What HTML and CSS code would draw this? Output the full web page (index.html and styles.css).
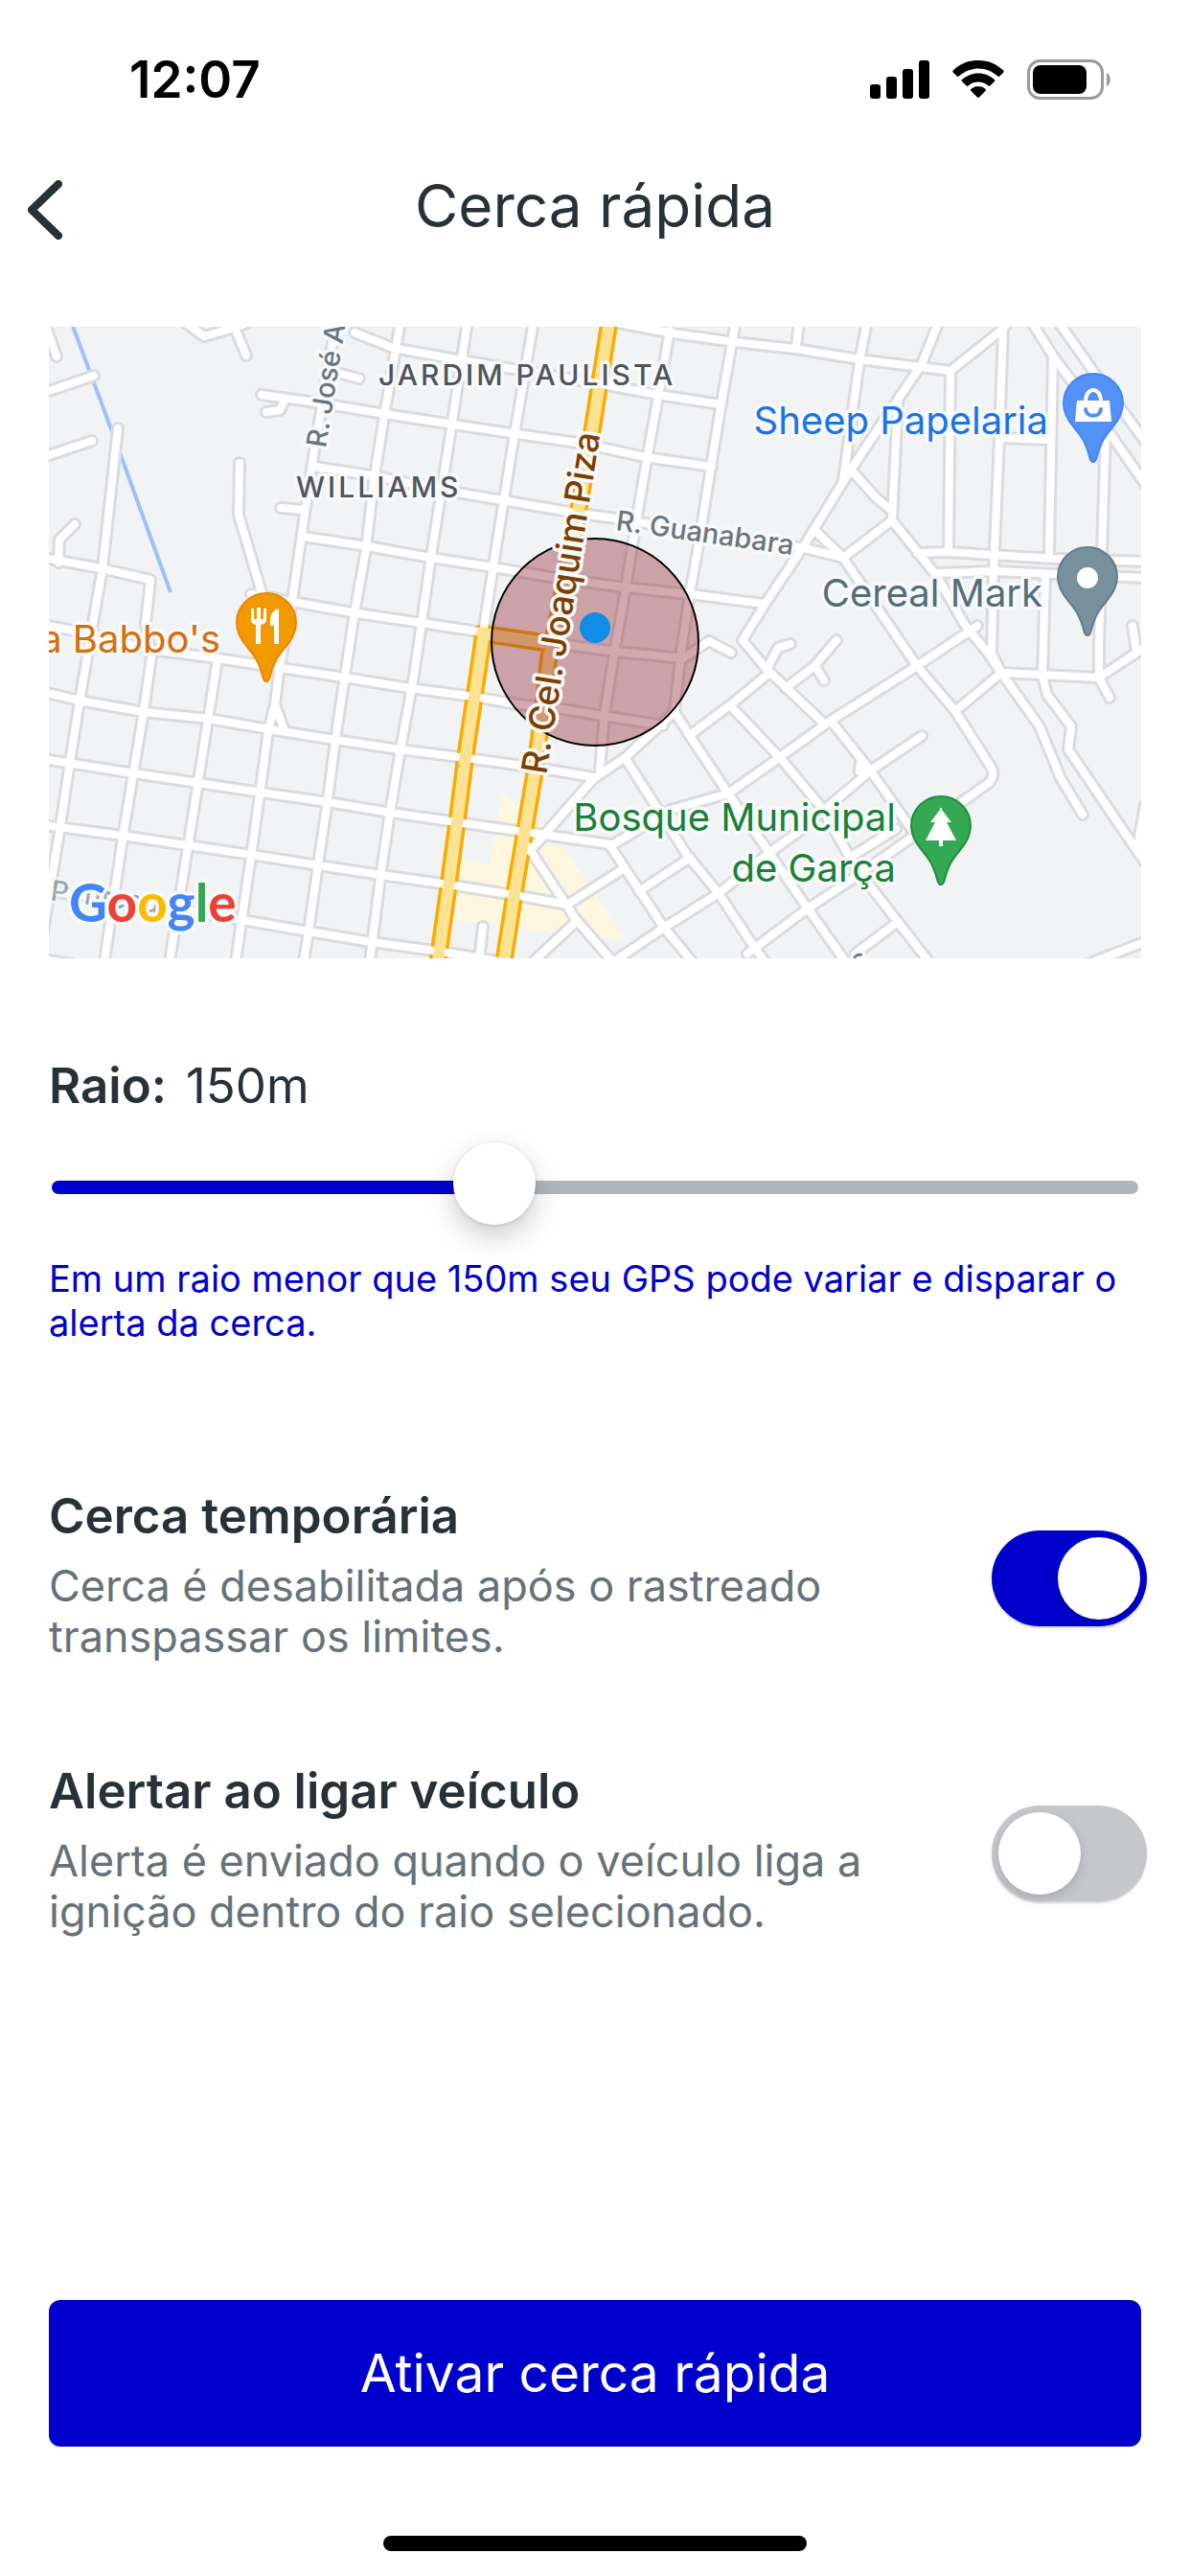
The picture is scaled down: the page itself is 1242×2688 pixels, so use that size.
FILE: index.html
```
<!DOCTYPE html>
<html lang="pt-BR">
<head>
    <meta charset="UTF-8">
    <meta name="viewport" content="width=device-width, initial-scale=1.0">
    <title>Cerca rápida</title>
    <link rel="stylesheet" href="styles.css">
</head>
<body>
    <div class="screen">
        <div class="status-bar">
            <span class="time">12:07</span>
            <div class="status-icons">
                <svg width="62" height="40" viewBox="0 0 62 40">
                    <rect x="0" y="25" width="11" height="15" rx="3"/>
                    <rect x="17" y="17" width="11" height="23" rx="3"/>
                    <rect x="34" y="9" width="11" height="31" rx="3"/>
                    <rect x="51" y="0" width="11" height="40" rx="3"/>
                </svg>
                <svg width="54" height="40" viewBox="0 0 54 40">
                    <path d="M27 0C16.500 0 7.500 4 .8 10.600c-.6.6-.6 1.300-.1 1.900l4 4.100c.6.6 1.400.6 2 0C12.200 11.400 19.200 8.500 27 8.500s14.800 2.900 20.300 8.100c.6.6 1.400.6 2 0l4-4.100c.5-.6.5-1.300-.1-1.900C46.500 4 37.500 0 27 0z"/>
                    <path d="M27 13.500c-6.600 0-12.500 2.500-16.900 6.600-.6.6-.6 1.300 0 1.900l4.500 4.500c.6.6 1.300.6 1.900 0 2.800-2.500 6.500-4 10.500-4s7.700 1.500 10.500 4c.6.6 1.300.6 1.900 0l4.500-4.500c.6-.6.6-1.300 0-1.900-4.400-4.100-10.300-6.600-16.900-6.600z"/>
                    <path d="M27 27c-3 0-5.600 1.100-7.600 2.900-.6.6-.6 1.300 0 1.900l6.600 6.600c.6.600 1.400.6 2 0l6.600-6.600c.6-.6.6-1.300 0-1.900-2-1.800-4.600-2.900-7.600-2.900z"/>
                </svg>
                <svg width="88" height="42" viewBox="0 0 88 42">
                    <rect x="1.500" y="1.500" width="77" height="39" rx="12" fill="none" stroke="#9a9a9a" stroke-width="3"/>
                    <rect x="6" y="6" width="56" height="30" rx="8"/>
                    <path d="M83 14c5 2 5 12 0 14z" fill="#9a9a9a"/>
                </svg>
            </div>
        </div>

        <header class="header">
            <button class="back" type="button" aria-label="Voltar">
                <svg width="36" height="62" viewBox="0 0 36 62">
                    <path d="M32 4L4 31l28 27" fill="none" stroke="#263238" stroke-width="8" stroke-linecap="round" stroke-linejoin="round"/>
                </svg>
            </button>
            <h1>Cerca rápida</h1>
        </header>

        <main class="content">
            <svg class="map" viewBox="51 341 1140 659" role="img" aria-label="Mapa">
                <defs>
                    <path id="pin" d="M-31 0a31 31 0 0 1 62 0C31 10 26 18 20 25 12 34 8 41 4 55 3 60 1 61 0 61s-3-1-4-6C-8 41-12 34-20 25-26 18-31 10-31 0z"/>
                    <g id="streets">
                        <!-- cross streets, west to east -->
                        <path d="M123 447L107 593 97 650 83 732 73 795 63 862 40 1003"/>
                        <path d="M51 583L105 593 157 605 152 650 158 685 150 742 140 802 129 868 109 1003"/>
                        <path d="M227 688L218 745 207 815 197 878 177 1003"/>
                        <path d="M351 335L345 370 328 470 317 543 305 627 292 695 287 735 280 762 272 822 263 887 246 1003M287 735L297 763"/>
                        <path d="M418 335L400 440 390 503 382 573 370 640 360 705 350 772 342 835 332 902 322 972 317 1003"/>
                        <path d="M488 335L472 440 460 517 450 580 440 650 432 705 418 782 407 848 398 908 386 1003"/>
                        <path d="M557 335L537 453 525 527 515 590 505 655"/>
                        <path d="M699 345L687 413 675 480 663 550 652 620 641 682 631 745 626 803"/>
                        <path d="M768 335L753 420 742 487 730 563 720 620 712 672 704 740"/>
                        <path d="M834 335L831 362M905 335L897 377 887 450 880 502"/>
                        <!-- long streets, north to south -->
                        <path d="M640 336L703 348 767 357 830 364 897 375 992 387 1047 343 1053 335"/>
                        <path d="M370 347L410 363 477 375 547 387 623 400 687 412 752 422"/>
                        <path d="M273 412L330 420 402 432 473 443 540 453 610 463 673 477 743 487"/>
                        <path d="M328 487L393 497 460 511 530 523 600 535 643 541 730 555 840 572 880 582"/>
                        <path d="M293 530L317 532M317 560L383 570 450 582 515 592 580 603 652 613 720 620 797 630"/>
                        <path d="M262 620L305 628 373 640 440 650 505 660 577 671 643 680 713 687 740 669 763 681"/>
                        <path d="M45 652L97 662 158 678 227 687 293 697 360 707 427 718 495 727 540 735 587 740 630 747 692 757"/>
                        <path d="M45 722L83 731 150 743 218 750 287 762 350 772 417 782 487 791 560 801 619 811"/>
                        <path d="M45 792L140 807 207 817 273 827 342 837 408 848 477 858 547 868 637 881"/>
                        <path d="M45 861L128 872 195 882 263 892 332 903 398 913 468 923 537 934 592 944"/>
                        <path d="M45 929L183 948 253 960 322 972 388 983 460 993 520 1003M45 1001L75 1006M504 967L500 1003"/>
                        <!-- west outskirts -->
                        <path d="M46 335L59 372M45 410L98 392M45 477L96 460M78 547L62 563 61 587"/>
                        <path d="M191 335L213 351 245 342 262 335M245 342L257 371M297 418L292 428 278 430M348 388L375 395"/>
                        <path d="M250 483L249 537 275 625"/>
                        <!-- south-east quarter -->
                        <path d="M553 888L619 813 653 790 704 743M592 944L650 907M557 1003L600 963"/>
                        <path d="M550 882L600 958 639 1003M637 883L693 968 722 1003M653 792L717 892 750 932 787 988 798 1003"/>
                        <path d="M704 743L720 768 760 828 803 890 843 948 882 1003M763 737L817 794 857 842 893 905 969 1003"/>
                        <path d="M637 883L700 845 760 828 800 800 867 752 957 695 1020 653"/>
                        <path d="M720 767L763 735 803 702M667 930L720 895M638 1005L693 968 750 932 803 890 833 868 910 803 962 768"/>
                        <path d="M910 803L897 805 898 795M780 995L843 948 893 915 950 875M893 995L937 962"/>
                        <path d="M867 752L907 802 952 866M890 893L935 865"/>
                        <path d="M820 718L850 695 873 668M852 697L860 710M801 697L812 676 825 672"/>
                        <!-- north-east quarter -->
                        <path d="M980 335L962 380 935 420 888 490 840 568 800 628 775 668 800 698 860 755"/>
                        <path d="M992 387L990 575M1047 343L1043 457 1037 597 1035 682 1045 702"/>
                        <path d="M1076 335L1100 373 1150 440 1197 508M1099 373L1095 577M1091 600L1088 705"/>
                        <path d="M1104 335L1143 390 1197 463M1045 457L1095 459M1154 450L1150 577 1147 670 1147 707"/>
                        <path d="M937 420L931 543 880 582M888 490L915 520 931 533M850 553L880 582 940 670 957 695 997 742 1034 800C1038 806 1037 811 1032 817L985 850"/>
                        <path d="M931 543L977 600 1007 652 1030 680 1045 702 1085 758 1107 812 1130 850"/>
                        <path d="M957 577L990 576 1100 583 1197 586M977 598L1040 596 1100 599 1197 603"/>
                        <path d="M997 742L1045 702 1147 707 1197 674M1147 707L1158 728"/>
                        <path d="M1088 705L1093 725 1118 758 1115 782 1197 903M1182 653L1186 680M1195 840L1187 885M1135 1006L1197 982"/>
                    </g>
                    <g id="avenues">
                        <path d="M636 335L618 450 602 543 583 640 573 685 563 768 557 812 547 872 537 932 526 1003"/>
                        <path d="M505 660L495 728 485 795 477 858 468 925 457 1003"/>
                        <path d="M503 661L577 672"/>
                    </g>
                </defs>
                <rect x="51" y="341" width="1140" height="659" fill="#f1f3f4"/>
                <path class="district" d="M523 828l44 32-14 35 24 38 20 25-20 15-102-13 8-63 28 5zM562 887l5-7 21 3 65 98-33-3-23-40z"/>
                <path class="river" d="M74 335L118 453 178 618"/>
                <use href="#streets" class="street-edge"/>
                <use href="#avenues" class="avenue-edge"/>
                <use href="#streets" class="street"/>
                <use href="#avenues" class="avenue"/>

                <circle cx="621" cy="670" r="108" fill="#912834" fill-opacity=".4" stroke="#000" stroke-width="2"/>

                <g class="label district-name">
                    <text x="395" y="402">JARDIM PAULISTA</text>
                    <text x="309" y="519">WILLIAMS</text>
                </g>
                <g class="label street-name">
                    <text transform="translate(340 468) rotate(-81)">R. José Au</text>
                    <text transform="translate(642 553) rotate(8)">R. Guanabara</text>
                    <text transform="translate(52 939) rotate(7)" opacity=".6">Penteado</text>
                    <text transform="translate(896 1014) rotate(-36)">s</text>
                </g>
                <text class="label avenue-name" transform="translate(570 809) rotate(-81)">R. Cel. Joaquim Piza</text>
                <circle cx="621" cy="655" r="16" fill="#118de8"/>

                <g class="label place">
                    <text x="1094" y="453" fill="#1a73e8">Sheep Papelaria</text>
                    <text x="1088" y="633" fill="#546e7a">Cereal Mark</text>
                    <text x="230" y="681" fill="#d56e0c">a Babbo's</text>
                    <text x="935" y="867" fill="#188038">Bosque Municipal</text>
                    <text x="935" y="920" fill="#188038">de Garça</text>
                </g>

                <g transform="translate(1141 421)">
                    <use href="#pin" fill="#5491f5" stroke="#4285f4" stroke-width="2"/>
                    <path d="M-17-3h34l2 22h-38z" fill="#fff"/>
                    <path d="M-8-2c0-16 16-16 16 0" fill="none" stroke="#fff" stroke-width="4"/>
                    <path d="M-8 6c1 9 15 9 16 0" fill="none" stroke="#5491f5" stroke-width="4" stroke-linecap="round"/>
                </g>
                <g transform="translate(1135 602)">
                    <use href="#pin" fill="#78909c" stroke="#607d8b" stroke-width="2"/>
                    <circle cy="1" r="11" fill="#fff"/>
                </g>
                <g transform="translate(278 650)">
                    <use href="#pin" fill="#f29900" stroke="#ea8600" stroke-width="2"/>
                    <path d="M-16-15v12q0 4 5 5v20h5V2q6-1 6-5v-12h-3v11h-3v-12h-4v12h-3v-11zM13-15Q4-13 4-2v5h4v19h5z" fill="#fff"/>
                </g>
                <g transform="translate(982 862)">
                    <use href="#pin" fill="#34a853" stroke="#1e8e3e" stroke-width="2"/>
                    <path d="M-1-19h2v2L11-4H6l10 19H2v6h-4v-6h-14L-6-4h-5l10-13z" fill="#fff"/>
                </g>

                <text class="label google" x="72" y="962"><tspan fill="#4285f4">G</tspan><tspan fill="#ea4335">o</tspan><tspan fill="#fbbc04">o</tspan><tspan fill="#4285f4">g</tspan><tspan fill="#34a853">l</tspan><tspan fill="#ea4335">e</tspan></text>
            </svg>

            <section class="radius">
                <label class="radius-label" for="radius"><strong>Raio:</strong> <span>150m</span></label>
                <input class="slider" id="radius" type="range" min="50" max="300" value="150">
                <p class="hint">Em um raio menor que 150m seu GPS pode variar e disparar o alerta da cerca.</p>
            </section>

            <section class="options">
                <div class="option">
                    <div class="option-text">
                        <label for="temporary">Cerca temporária</label>
                        <p>Cerca é desabilitada após o rastreado transpassar os limites.</p>
                    </div>
                    <input class="switch" id="temporary" type="checkbox" role="switch" checked>
                </div>
                <div class="option">
                    <div class="option-text">
                        <label for="ignition">Alertar ao ligar veículo</label>
                        <p>Alerta é enviado quando o veículo liga a ignição dentro do raio selecionado.</p>
                    </div>
                    <input class="switch" id="ignition" type="checkbox" role="switch">
                </div>
            </section>

            <button class="activate" type="button">Ativar cerca rápida</button>
        </main>
        <div class="home-bar"></div>
    </div>
</body>
</html>
```
FILE: styles.css
```
* {
    box-sizing: border-box;
}
body {
    margin: 0;
    background: #fff;
    color: #263238;
    font-family: Inter, 'Liberation Sans', sans-serif;
}
h1, p {
    margin: 0;
}
.screen {
    display: flex;
    flex-direction: column;
    min-height: 100vh;
}
.status-bar {
    display: flex;
    justify-content: space-between;
    align-items: center;
    padding: 51px 82px 0 135px;
    color: #000;
}
.time {
    font-size: 53px;
    line-height: 64px;
    font-weight: 600;
}
.status-icons {
    display: flex;
    align-items: center;
    gap: 24px;
}
.header {
    display: grid;
    grid-template-columns: 96px 1fr 96px;
    align-items: center;
    height: 120px;
    margin-top: 42px;
}
.back {
    justify-self: start;
    display: flex;
    margin-top: 4px;
    padding: 0 0 0 29px;
    border: none;
    background: none;
    cursor: pointer;
}
.header h1 {
    padding-bottom: 4px;
    font-size: 62px;
    line-height: 78px;
    font-weight: 400;
    text-align: center;
}
.content {
    flex: 1;
    display: flex;
    flex-direction: column;
    padding: 64px 51px 0;
}

/* map */
.map {
    display: block;
    width: 100%;
    height: auto;
    overflow: hidden;
}
.district {
    fill: #fef7e0;
}
.river {
    fill: none;
    stroke: #9dc1fb;
    stroke-width: 4;
}
.street-edge, .street, .avenue-edge, .avenue {
    fill: none;
    stroke-linecap: round;
    stroke-linejoin: round;
}
.street-edge {
    stroke: #dadce0;
    stroke-width: 14;
}
.street {
    stroke: #fff;
    stroke-width: 8;
}
.avenue-edge {
    stroke: #f9ab00;
    stroke-width: 19;
}
.avenue {
    stroke: #fde293;
    stroke-width: 12;
}
.label {
    paint-order: stroke;
    stroke: #f8f9fa;
    stroke-width: 7px;
    stroke-linejoin: round;
}
.district-name {
    fill: #50555c;
    font-size: 30px;
    font-weight: 500;
    letter-spacing: 3px;
}
.street-name {
    fill: #6b757b;
    font-size: 29px;
    font-weight: 500;
}
.avenue-name {
    fill: #7c3f00;
    font-size: 37px;
    font-weight: 500;
}
.place {
    font-size: 40px;
    text-anchor: end;
}
.google {
    font-family: Lato, sans-serif;
    font-size: 55px;
    font-weight: 700;
}

/* radius */
.radius {
    margin-top: 101px;
}
.radius-label {
    display: flex;
    gap: 20px;
    font-size: 51px;
    line-height: 64px;
}
.radius-label strong, .option-text label {
    font-weight: 600;
}
.slider {
    appearance: none;
    display: block;
    width: calc(100% - 6px);
    height: 86px;
    margin: 31px 3px 0;
    background: none;
    cursor: pointer;
}
.slider::-webkit-slider-runnable-track {
    height: 14px;
    border-radius: 7px;
    background: linear-gradient(to right, #0000cd 40%, #b0b6ba 40%);
}
.slider::-webkit-slider-thumb {
    appearance: none;
    width: 86px;
    height: 86px;
    margin-top: -40px;
    border-radius: 50%;
    background: #fff;
    box-shadow: 0 12px 30px rgba(0, 0, 0, 0.2), 0 1px 4px rgba(0, 0, 0, 0.12);
}
.hint {
    margin-top: 29px;
    color: #0000cd;
    font-size: 38px;
    line-height: 46px;
}

/* options */
.options {
    display: flex;
    flex-direction: column;
    gap: 93px;
    margin-top: 147px;
}
.option {
    display: flex;
    justify-content: space-between;
    align-items: center;
    margin-right: -6px;
}
.option-text {
    flex: 1;
    max-width: 880px;
    padding-bottom: 10px;
}
.option-text label {
    display: block;
    font-size: 51px;
    line-height: 64px;
}
.option-text p {
    margin-top: 14px;
    color: #66727a;
    font-size: 45px;
    line-height: 53px;
}
.switch {
    appearance: none;
    flex: none;
    width: 162px;
    height: 100px;
    margin: 0;
    padding: 7px;
    border-radius: 50px;
    background: #c5c7cb;
    box-shadow: 0 2px 2px rgba(0, 0, 0, 0.15);
    cursor: pointer;
}
.switch::before {
    content: "";
    display: block;
    width: 86px;
    height: 86px;
    border-radius: 50%;
    background: #fff;
    box-shadow: 0 4px 12px rgba(0, 0, 0, 0.15);
}
.switch:checked {
    background: #0000cd;
}
.switch:checked::before {
    margin-left: auto;
}

.activate {
    margin-top: auto;
    padding: 42px;
    border: none;
    border-radius: 12px;
    background: #0000cd;
    color: #fff;
    font-family: inherit;
    font-size: 55px;
    line-height: 69px;
    cursor: pointer;
}
.home-bar {
    align-self: center;
    width: 442px;
    height: 16px;
    margin: 93px 0 26px;
    border-radius: 8px;
    background: #000;
}
```
